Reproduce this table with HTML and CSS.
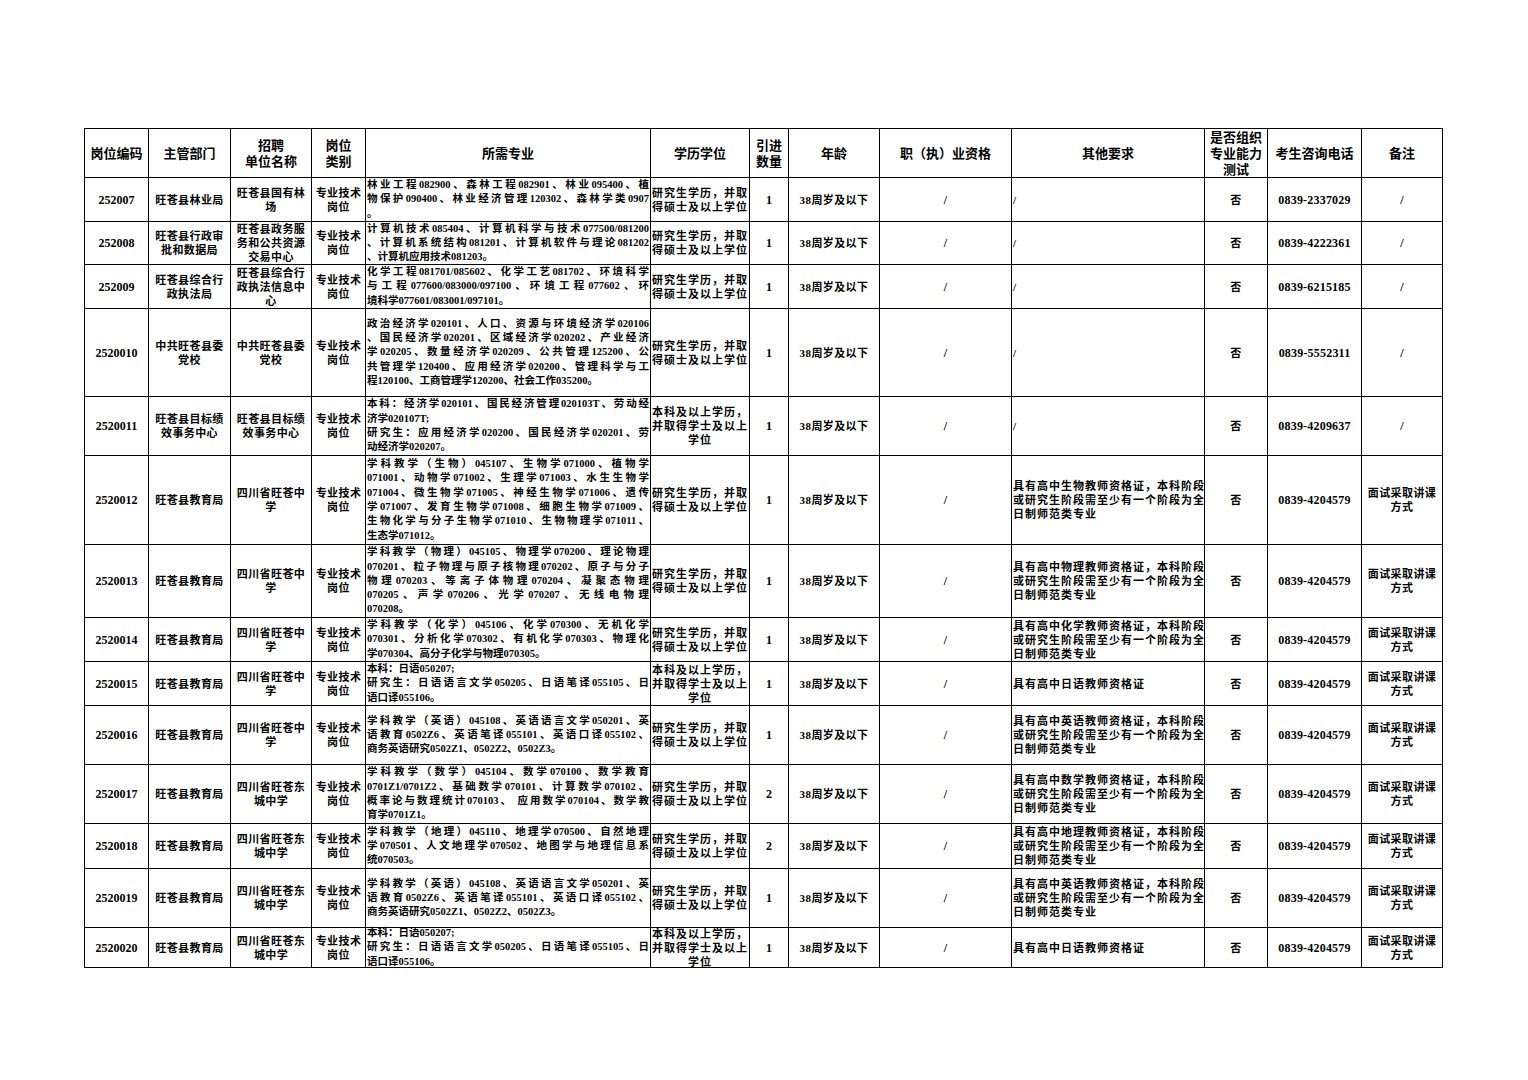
FILE: index.html
```html
<!DOCTYPE html>
<html lang="zh-CN">
<head>
<meta charset="utf-8">
<title>岗位表</title>
<link rel="stylesheet" href="styles.css">
</head>
<body>
<div class="page">
<div class="tbl">
  <div class="h">岗位编码</div>
  <div class="h">主管部门</div>
  <div class="h"><span>招聘<br>单位名称</span></div>
  <div class="h"><span>岗位<br>类别</span></div>
  <div class="h">所需专业</div>
  <div class="h">学历学位</div>
  <div class="h"><span>引进<br>数量</span></div>
  <div class="h">年龄</div>
  <div class="h">职（执）业资格</div>
  <div class="h">其他要求</div>
  <div class="h"><span>是否组织<br>专业能力<br>测试</span></div>
  <div class="h">考生咨询电话</div>
  <div class="h">备注</div>

  <div class="n">252007</div>
  <div>旺苍县林业局</div>
  <div><span>旺苍县国有林<br>场</span></div>
  <div><span>专业技术<br>岗位</span></div>
  <div class="m"><div class="l">林业工程082900、森林工程082901、林业095400、植</div><div class="l">物保护090400、林业经济管理120302、森林学类0907</div><div class="l e">。</div></div>
  <div class="e"><span>研究生学历，并取<br>得硕士及以上学位</span></div>
  <div class="n">1</div>
  <div>38周岁及以下</div>
  <div class="n">/</div>
  <div class="r">/</div>
  <div>否</div>
  <div class="p">0839-2337029</div>
  <div class="n">/</div>

  <div class="n">252008</div>
  <div><span>旺苍县行政审<br>批和数据局</span></div>
  <div><span>旺苍县政务服<br>务和公共资源<br>交易中心</span></div>
  <div><span>专业技术<br>岗位</span></div>
  <div class="m"><div class="l">计算机技术085404、计算机科学与技术077500/081200</div><div class="l">、计算机系统结构081201、计算机软件与理论081202</div><div class="l e">、计算机应用技术081203。</div></div>
  <div class="e"><span>研究生学历，并取<br>得硕士及以上学位</span></div>
  <div class="n">1</div>
  <div>38周岁及以下</div>
  <div class="n">/</div>
  <div class="r">/</div>
  <div>否</div>
  <div class="p">0839-4222361</div>
  <div class="n">/</div>

  <div class="n">252009</div>
  <div><span>旺苍县综合行<br>政执法局</span></div>
  <div><span>旺苍县综合行<br>政执法信息中<br>心</span></div>
  <div><span>专业技术<br>岗位</span></div>
  <div class="m"><div class="l">化学工程081701/085602、化学工艺081702、环境科学</div><div class="l">与工程077600/083000/097100、环境工程077602、环</div><div class="l e">境科学077601/083001/097101。</div></div>
  <div class="e"><span>研究生学历，并取<br>得硕士及以上学位</span></div>
  <div class="n">1</div>
  <div>38周岁及以下</div>
  <div class="n">/</div>
  <div class="r">/</div>
  <div>否</div>
  <div class="p">0839-6215185</div>
  <div class="n">/</div>

  <div class="n">2520010</div>
  <div><span>中共旺苍县委<br>党校</span></div>
  <div><span>中共旺苍县委<br>党校</span></div>
  <div><span>专业技术<br>岗位</span></div>
  <div class="m"><div class="l">政治经济学020101、人口、资源与环境经济学020106</div><div class="l">、国民经济学020201、区域经济学020202、产业经济</div><div class="l">学020205、数量经济学020209、公共管理125200、公</div><div class="l">共管理学120400、应用经济学020200、管理科学与工</div><div class="l e">程120100、工商管理学120200、社会工作035200。</div></div>
  <div class="e"><span>研究生学历，并取<br>得硕士及以上学位</span></div>
  <div class="n">1</div>
  <div>38周岁及以下</div>
  <div class="n">/</div>
  <div class="r">/</div>
  <div>否</div>
  <div class="p">0839-5552311</div>
  <div class="n">/</div>

  <div class="n">2520011</div>
  <div><span>旺苍县目标绩<br>效事务中心</span></div>
  <div><span>旺苍县目标绩<br>效事务中心</span></div>
  <div><span>专业技术<br>岗位</span></div>
  <div class="m"><div class="l">本科：经济学020101、国民经济管理020103T、劳动经</div><div class="l e">济学020107T;</div><div class="l">研究生：应用经济学020200、国民经济学020201、劳</div><div class="l e">动经济学020207。</div></div>
  <div class="e"><span>本科及以上学历，<br>并取得学士及以上<br>学位</span></div>
  <div class="n">1</div>
  <div>38周岁及以下</div>
  <div class="n">/</div>
  <div class="r">/</div>
  <div>否</div>
  <div class="p">0839-4209637</div>
  <div class="n">/</div>

  <div class="n">2520012</div>
  <div>旺苍县教育局</div>
  <div><span>四川省旺苍中<br>学</span></div>
  <div><span>专业技术<br>岗位</span></div>
  <div class="m"><div class="l">学科教学（生物）045107、生物学071000、植物学</div><div class="l">071001、动物学071002、生理学071003、水生生物学</div><div class="l">071004、微生物学071005、神经生物学071006、遗传</div><div class="l">学071007、发育生物学071008、细胞生物学071009、</div><div class="l">生物化学与分子生物学071010、生物物理学071011、</div><div class="l e">生态学071012。</div></div>
  <div class="e"><span>研究生学历，并取<br>得硕士及以上学位</span></div>
  <div class="n">1</div>
  <div>38周岁及以下</div>
  <div class="n">/</div>
  <div class="r"><span>具有高中生物教师资格证，本科阶段<br>或研究生阶段需至少有一个阶段为全<br>日制师范类专业</span></div>
  <div>否</div>
  <div class="p">0839-4204579</div>
  <div><span>面试采取讲课<br>方式</span></div>

  <div class="n">2520013</div>
  <div>旺苍县教育局</div>
  <div><span>四川省旺苍中<br>学</span></div>
  <div><span>专业技术<br>岗位</span></div>
  <div class="m"><div class="l">学科教学（物理）045105、物理学070200、理论物理</div><div class="l">070201、粒子物理与原子核物理070202、原子与分子</div><div class="l">物理070203、等离子体物理070204、凝聚态物理</div><div class="l">070205、声学070206、光学070207、无线电物理</div><div class="l e">070208。</div></div>
  <div class="e"><span>研究生学历，并取<br>得硕士及以上学位</span></div>
  <div class="n">1</div>
  <div>38周岁及以下</div>
  <div class="n">/</div>
  <div class="r"><span>具有高中物理教师资格证，本科阶段<br>或研究生阶段需至少有一个阶段为全<br>日制师范类专业</span></div>
  <div>否</div>
  <div class="p">0839-4204579</div>
  <div><span>面试采取讲课<br>方式</span></div>

  <div class="n">2520014</div>
  <div>旺苍县教育局</div>
  <div><span>四川省旺苍中<br>学</span></div>
  <div><span>专业技术<br>岗位</span></div>
  <div class="m"><div class="l">学科教学（化学）045106、化学070300、无机化学</div><div class="l">070301、分析化学070302、有机化学070303、物理化</div><div class="l e">学070304、高分子化学与物理070305。</div></div>
  <div class="e"><span>研究生学历，并取<br>得硕士及以上学位</span></div>
  <div class="n">1</div>
  <div>38周岁及以下</div>
  <div class="n">/</div>
  <div class="r"><span>具有高中化学教师资格证，本科阶段<br>或研究生阶段需至少有一个阶段为全<br>日制师范类专业</span></div>
  <div>否</div>
  <div class="p">0839-4204579</div>
  <div><span>面试采取讲课<br>方式</span></div>

  <div class="n">2520015</div>
  <div>旺苍县教育局</div>
  <div><span>四川省旺苍中<br>学</span></div>
  <div><span>专业技术<br>岗位</span></div>
  <div class="m"><div class="l e">本科：日语050207;</div><div class="l">研究生：日语语言文学050205、日语笔译055105、日</div><div class="l e">语口译055106。</div></div>
  <div class="e"><span>本科及以上学历，<br>并取得学士及以上<br>学位</span></div>
  <div class="n">1</div>
  <div>38周岁及以下</div>
  <div class="n">/</div>
  <div class="r">具有高中日语教师资格证</div>
  <div>否</div>
  <div class="p">0839-4204579</div>
  <div><span>面试采取讲课<br>方式</span></div>

  <div class="n">2520016</div>
  <div>旺苍县教育局</div>
  <div><span>四川省旺苍中<br>学</span></div>
  <div><span>专业技术<br>岗位</span></div>
  <div class="m"><div class="l">学科教学（英语）045108、英语语言文学050201、英</div><div class="l">语教育0502Z6、英语笔译055101、英语口译055102、</div><div class="l e">商务英语研究0502Z1、0502Z2、0502Z3。</div></div>
  <div class="e"><span>研究生学历，并取<br>得硕士及以上学位</span></div>
  <div class="n">1</div>
  <div>38周岁及以下</div>
  <div class="n">/</div>
  <div class="r"><span>具有高中英语教师资格证，本科阶段<br>或研究生阶段需至少有一个阶段为全<br>日制师范类专业</span></div>
  <div>否</div>
  <div class="p">0839-4204579</div>
  <div><span>面试采取讲课<br>方式</span></div>

  <div class="n">2520017</div>
  <div>旺苍县教育局</div>
  <div><span>四川省旺苍东<br>城中学</span></div>
  <div><span>专业技术<br>岗位</span></div>
  <div class="m"><div class="l">学科教学（数学）045104、数学070100、数学教育</div><div class="l">0701Z1/0701Z2、基础数学070101、计算数学070102、</div><div class="l">概率论与数理统计070103、 应用数学070104、数学教</div><div class="l e">育学0701Z1。</div></div>
  <div class="e"><span>研究生学历，并取<br>得硕士及以上学位</span></div>
  <div class="n">2</div>
  <div>38周岁及以下</div>
  <div class="n">/</div>
  <div class="r"><span>具有高中数学教师资格证，本科阶段<br>或研究生阶段需至少有一个阶段为全<br>日制师范类专业</span></div>
  <div>否</div>
  <div class="p">0839-4204579</div>
  <div><span>面试采取讲课<br>方式</span></div>

  <div class="n">2520018</div>
  <div>旺苍县教育局</div>
  <div><span>四川省旺苍东<br>城中学</span></div>
  <div><span>专业技术<br>岗位</span></div>
  <div class="m"><div class="l">学科教学（地理）045110、地理学070500、自然地理</div><div class="l">学070501、人文地理学070502、地图学与地理信息系</div><div class="l e">统070503。</div></div>
  <div class="e"><span>研究生学历，并取<br>得硕士及以上学位</span></div>
  <div class="n">2</div>
  <div>38周岁及以下</div>
  <div class="n">/</div>
  <div class="r"><span>具有高中地理教师资格证，本科阶段<br>或研究生阶段需至少有一个阶段为全<br>日制师范类专业</span></div>
  <div>否</div>
  <div class="p">0839-4204579</div>
  <div><span>面试采取讲课<br>方式</span></div>

  <div class="n">2520019</div>
  <div>旺苍县教育局</div>
  <div><span>四川省旺苍东<br>城中学</span></div>
  <div><span>专业技术<br>岗位</span></div>
  <div class="m"><div class="l">学科教学（英语）045108、英语语言文学050201、英</div><div class="l">语教育0502Z6、英语笔译055101、英语口译055102、</div><div class="l e">商务英语研究0502Z1、0502Z2、0502Z3。</div></div>
  <div class="e"><span>研究生学历，并取<br>得硕士及以上学位</span></div>
  <div class="n">1</div>
  <div>38周岁及以下</div>
  <div class="n">/</div>
  <div class="r"><span>具有高中英语教师资格证，本科阶段<br>或研究生阶段需至少有一个阶段为全<br>日制师范类专业</span></div>
  <div>否</div>
  <div class="p">0839-4204579</div>
  <div><span>面试采取讲课<br>方式</span></div>

  <div class="n">2520020</div>
  <div>旺苍县教育局</div>
  <div><span>四川省旺苍东<br>城中学</span></div>
  <div><span>专业技术<br>岗位</span></div>
  <div class="m"><div class="l e">本科：日语050207;</div><div class="l">研究生：日语语言文学050205、日语笔译055105、日</div><div class="l e">语口译055106。</div></div>
  <div class="e"><span>本科及以上学历，<br>并取得学士及以上<br>学位</span></div>
  <div class="n">1</div>
  <div>38周岁及以下</div>
  <div class="n">/</div>
  <div class="r">具有高中日语教师资格证</div>
  <div>否</div>
  <div class="p">0839-4204579</div>
  <div><span>面试采取讲课<br>方式</span></div>
</div>
</div>
</body>
</html>
```

FILE: styles.css
```css
* { box-sizing: border-box; }
html, body { margin: 0; padding: 0; background: #fff; }
body {
  font-family: "Liberation Serif", "Noto Sans CJK SC", serif;
  font-weight: 700;
  color: #000;
}
.page { padding: 128px 0 0 84px; }
.tbl {
  display: grid;
  grid-template-columns: 63px 81px 80px 53px 284px 98px 38px 90px 131px 192px 62px 93px 80px;
  grid-template-rows: 48px 43px 42px 43px 87px 58px 88px 72px 43px 43px 58px 58px 44px 58px 39px;
  gap: 1px;
  background: #000;
  border: 1px solid #000;
  width: max-content;
}
.tbl > div {
  background: #fff;
  display: flex;
  align-items: center;
  justify-content: center;
  text-align: center;
  white-space: nowrap;
  font-size: 11px;
  line-height: 14px;
  letter-spacing: 0.4px;
  min-width: 0;
}
.tbl > .h {
  font-family: "Noto Sans CJK SC", sans-serif;
  font-size: 13px;
  line-height: 16px;
  letter-spacing: 0;
}
.tbl > .n { font-size: 12px; letter-spacing: 0; }
.tbl > .p { font-size: 12px; letter-spacing: 0.2px; }
.tbl > .e { letter-spacing: 1px; }
.tbl > .r {
  justify-content: flex-start;
  text-align: left;
  padding-left: 1px;
  letter-spacing: 1px;
}
.tbl > .m {
  flex-direction: column;
  align-items: stretch;
  justify-content: center;
  padding: 0 1px;
  font-size: 10.5px;
  line-height: 14.3px;
  letter-spacing: 0;
  white-space: normal;
}
.m .l { text-align: justify; text-align-last: justify; }
.m .l.e { text-align-last: left; letter-spacing: 0; }
```
